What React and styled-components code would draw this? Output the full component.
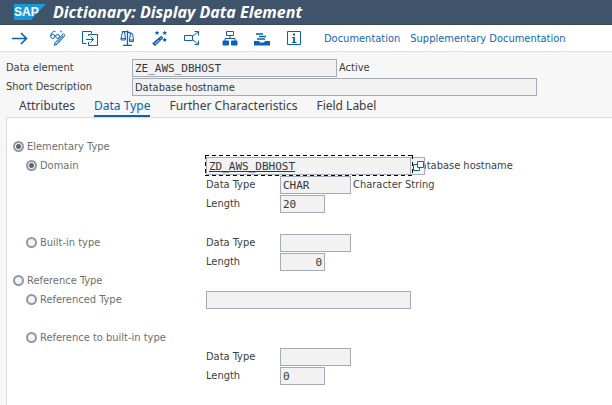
import React from 'react';
import styled, { createGlobalStyle, css } from 'styled-components';

const Global = createGlobalStyle`
  *, *::before, *::after { box-sizing: border-box; }
  body { margin: 0; background: #f7f7f7; color: #3c4043; }
  body, button, input { font: 11px/19px "DejaVu Sans Condensed", Roboto, sans-serif; }
`;

const Page = styled.div`
  display: flex;
  flex-direction: column;
  min-height: 100vh;
  overflow: hidden;
`;

const TitleBar = styled.header`
  display: flex;
  align-items: center;
  gap: 7px;
  height: 25px;
  padding-left: 14px;
  background: #3f546b;
  border-bottom: 1px solid #34485e;
`;

const Title = styled.h1`
  margin: 0;
  color: #fff;
  font-family: "Noto Sans", sans-serif;
  font-size: 16px;
  line-height: 24px;
  font-weight: 700;
  font-style: italic;
  white-space: nowrap;
`;

const Toolbar = styled.nav`
  display: flex;
  align-items: center;
  gap: 22px;
  height: 27px;
  padding-left: 12px;
  background: #fff;
  border-bottom: 1px solid #dedede;
`;

const ToolGroup = styled.div`
  display: flex;
  gap: ${(p) => p.$gap || 16}px;
`;

const bare = css`
  padding: 0;
  border: 0;
  background: none;
  cursor: pointer;
`;

const IconButton = styled.button`
  ${bare}
  display: flex;
  width: 16px;
  height: 16px;
  color: #0a61b5;
  svg { display: block; }
`;

const TextButton = styled.button`
  ${bare}
  color: #1466b3;
  white-space: nowrap;
`;

const Header = styled.section`
  display: grid;
  grid-template-columns: 126px 1fr;
  padding: 6px 6px 0;
`;

const HeaderLabel = styled.label`
  line-height: 20px;
  height: 19px;
  white-space: nowrap;
`;

const FieldLine = styled.div`
  display: flex;
  align-items: center;
  gap: 2px;
  height: 19px;
  white-space: nowrap;
`;

const Field = styled.input`
  flex: none;
  width: ${(p) => p.$w}px;
  height: 18px;
  padding: 1px 2px 0;
  border: 1px solid #a3abb5;
  border-radius: 0;
  outline: 0;
  background: #f2f2f2;
  color: #33373b;
  line-height: 15px;
  text-align: ${(p) => (p.$right ? 'right' : 'left')};
  ${(p) => p.$mono && css`font-family: "DejaVu Sans Mono", monospace;`}
  ${(p) => p.$link && css`text-decoration: underline;`}
`;

const Tabs = styled.div`
  display: flex;
  gap: 19px;
  height: 21px;
  padding-left: 19px;
`;

const Tab = styled.button`
  ${bare}
  height: 21px;
  border-bottom: 2px solid ${(p) => (p.$active ? '#0a61b5' : 'transparent')};
  color: ${(p) => (p.$active ? '#0a61b5' : '#3c4043')};
  font-family: "Noto Sans", sans-serif;
  font-size: 12px;
  line-height: 19px;
  white-space: nowrap;
`;

const Panel = styled.main`
  flex: 1;
  margin-left: 6px;
  padding: 19px 0 0 6px;
  border: 1px solid #dcdcdc;
  border-width: 1px 0 0 1px;
  background: #fff;
`;

const Group = styled.section`
  display: flex;
  flex-direction: column;
`;

const Option = styled.div`
  display: grid;
  grid-template-columns: 193px 1fr;
  min-height: 38px;
  margin-bottom: ${(p) => p.$after || 0}px;
`;

const RadioLabel = styled.label`
  display: flex;
  align-items: center;
  gap: 3px;
  height: 19px;
  padding-left: ${(p) => (p.$nested ? 13 : 0)}px;
  color: #6c6f73;
  white-space: nowrap;
`;

const Radio = styled.input`
  appearance: none;
  flex: none;
  width: 11px;
  height: 11px;
  margin: 0;
  border: 2px solid #8d98a8;
  border-radius: 50%;
  background: #f4f4f4;
  &:checked { background: radial-gradient(circle, #5f6670 2px, #f4f4f4 3px); }
`;

const Detail = styled.div`
  display: flex;
  flex-direction: column;
`;

const DetailLabel = styled.label`
  width: 72px;
`;

const dash = '#000 0 4px, transparent 4px 7px';

const DomainBox = styled.div`
  position: relative;
  display: flex;
  flex: none;
  width: 205px;
  height: 18px;
  &::after {
    content: '';
    position: absolute;
    inset: -2px -2px -1px -1px;
    background:
      repeating-linear-gradient(to right, ${dash}) top / 100% 1px no-repeat,
      repeating-linear-gradient(to right, ${dash}) bottom / 100% 1px no-repeat,
      repeating-linear-gradient(to bottom, ${dash}) left / 1px 100% no-repeat,
      repeating-linear-gradient(to bottom, ${dash}) right / 1px 100% no-repeat;
    pointer-events: none;
  }
`;

const LookupButton = styled.button`
  position: absolute;
  top: 0;
  left: 205px;
  width: 14px;
  height: 18px;
  padding: 2px 0 0 2px;
  border: 1px solid #a3abb5;
  border-left: 0;
  background: #f4f4f4;
  color: #0a61b5;
  svg { display: block; }
`;

const Svg = ({ children }) => (
  <svg width="16" height="16" viewBox="0 0 16 16" fill="none" stroke="currentColor" strokeWidth="1" aria-hidden="true">
    {children}
  </svg>
);

const icons = {
  enter: <path d="M0 8.5h14M9 3l5.5 5.5L9 14" strokeWidth="1.6" />,
  display: (
    <>
      <path d="M5.5 1.2C3 1 .7 3 .7 6.2" />
      <circle cx="2.7" cy="6.4" r="2" />
      <circle cx="7.6" cy="6.4" r="1.9" />
      <path d="M10 1.2c1-.4 2 .2 1.8 1.2M4.7 5.8q.6-.5 1 0" />
      <path d="M13.4 3.8l1.6 1.5-8 9-2.6 1 .8-2.7zM5.6 13l1.2 1.2M11.8 5.6l1.6 1.5M7 12.6l5.5-6" />
    </>
  ),
  other: (
    <>
      <path d="M9.5 3.5v-2h-9v12h4M6.5 6V4.5h9v11h-9V12" />
      <path d="M4 9.5h7.5M8.5 6.5l3 3-3 3" />
    </>
  ),
  scales: (
    <>
      <path d="M7.5 .5V15M3 15.3h9M2 1.6h5l5 2" strokeWidth="1.3" />
      <path d="M2.5 2L1 8.500v1.500h4.500V8.500L4.500 2M1 8.500h4.500M10.500 3.500L9.500 10v1.500h4V10l-1-6.500M9.500 10h4" />
    </>
  ),
  wand: (
    <>
      <path d="M9 6.5l1.5 1.5-7.5 7.3-2-1.8zM7 8.5l1.5 1.5M2 13.5l6.5-6" strokeWidth="1.2" />
      <g fill="currentColor" stroke="none">
        <path d="M5 .5l.7 1.5 1.6.2-1.2 1.1.3 1.6L5 4.1l-1.4.8.3-1.6-1.2-1.1 1.6-.2z" />
        <path d="M12.7.5l.7 1.5 1.6.2-1.2 1.1.3 1.6-1.4-.8-1.4.8.3-1.6-1.2-1.1 1.6-.2z" />
        <path d="M12.7 7.5l.7 1.5 1.6.2-1.2 1.1.3 1.6-1.4-.8-1.4.8.3-1.6-1.2-1.1 1.6-.2z" />
      </g>
    </>
  ),
  whereUsed: (
    <>
      <path d="M.5 5.5h8v5h-8z" />
      <path d="M9 6l5.5-4.5M9 10l5.5 4.5M10.5 1.5h4v4M10.5 14.5h4v-4" />
    </>
  ),
  hierarchy: (
    <>
      <path d="M4.5 1.5h7v4h-7zM8 5.5v3M3 11V8.5h10V11" />
      <path d="M1 11h5.5v4H1zM9.5 11H15v4H9.5z" fill="currentColor" />
    </>
  ),
  stack: (
    <>
      <path d="M2 4h7M5 6.5h7M3 9h8" strokeWidth="1.5" />
      <path d="M0 11h5l1 1.5h4L11 11h5v4.5H0z" fill="currentColor" stroke="none" />
    </>
  ),
  info: (
    <>
      <path d="M1.5 1.5h13v13h-13z" />
      <path d="M7 3.5h2v2H7zM6 7h3v5h1.5v1H6v-1h1.2V8H6z" fill="currentColor" stroke="none" />
    </>
  ),
};

const toolGroups = [
  [['Enter', 'enter']],
  [['Display or change', 'display'], ['Other object', 'other']],
  [['Check', 'scales'], ['Activate', 'wand'], ['Where-used list', 'whereUsed']],
  [['Object hierarchy', 'hierarchy'], ['Append', 'stack'], ['Information', 'info']],
];

const tabs = ['Attributes', 'Data Type', 'Further Characteristics', 'Field Label'];

function SapLogo() {
  return (
    <svg width="32" height="16" viewBox="0 0 32 16" role="img" aria-label="SAP">
      <path d="M0 0h32L17 16H0z" fill="#1899dc" />
      <text x="0" y="12" fill="#fff" fontFamily="Liberation Sans, sans-serif" fontWeight="700" fontSize="12">SAP</text>
    </svg>
  );
}

function RadioOption({ name, label, nested, checked }) {
  return (
    <RadioLabel $nested={nested}>
      <Radio type="radio" name={name} defaultChecked={checked} />
      {label}
    </RadioLabel>
  );
}

function DetailLine({ id, label, width, value = '', right, note }) {
  return (
    <FieldLine>
      <DetailLabel htmlFor={id}>{label}</DetailLabel>
      <Field id={id} $w={width} $mono $right={right} defaultValue={value} readOnly />
      {note && <span>{note}</span>}
    </FieldLine>
  );
}

export default function App() {
  return (
    <Page>
      <Global />
      <TitleBar>
        <SapLogo />
        <Title>Dictionary: Display Data Element</Title>
      </TitleBar>

      <Toolbar>
        {toolGroups.map((group) => (
          <ToolGroup key={group[0][1]}>
            {group.map(([label, icon]) => (
              <IconButton key={icon} type="button" aria-label={label}>
                <Svg>{icons[icon]}</Svg>
              </IconButton>
            ))}
          </ToolGroup>
        ))}
        <ToolGroup $gap={10}>
          <TextButton type="button">Documentation</TextButton>
          <TextButton type="button">Supplementary Documentation</TextButton>
        </ToolGroup>
      </Toolbar>

      <Header>
        <HeaderLabel htmlFor="element">Data element</HeaderLabel>
        <FieldLine>
          <Field id="element" $w={205} $mono defaultValue="ZE_AWS_DBHOST" readOnly />
          <span>Active</span>
        </FieldLine>
        <HeaderLabel htmlFor="description">Short Description</HeaderLabel>
        <FieldLine>
          <Field id="description" $w={405} defaultValue="Database hostname" readOnly />
        </FieldLine>
      </Header>

      <Tabs role="tablist">
        {tabs.map((name) => (
          <Tab key={name} type="button" role="tab" aria-selected={name === 'Data Type'} $active={name === 'Data Type'}>
            {name}
          </Tab>
        ))}
      </Tabs>

      <Panel>
        <Group>
          <RadioOption name="category" label="Elementary Type" checked />
          <Option $after={20}>
            <RadioOption name="elementary" label="Domain" nested checked />
            <Detail>
              <FieldLine>
                <DomainBox>
                  <Field $w={205} $mono $link aria-label="Domain name" defaultValue="ZD_AWS_DBHOST" readOnly />
                  <LookupButton type="button" aria-label="Search help">
                    <svg width="12" height="11" viewBox="0 0 12 11" fill="#fff" stroke="currentColor" aria-hidden="true">
                      <path d="M.5 3.5h6v6h-6z" />
                      <path d="M4.5.5h6v6h-6z" />
                    </svg>
                  </LookupButton>
                </DomainBox>
                <span>Database hostname</span>
              </FieldLine>
              <DetailLine id="domain-type" label="Data Type" width={71} value="CHAR" note="Character String" />
              <DetailLine id="domain-length" label="Length" width={45} value="20" />
            </Detail>
          </Option>
          <Option>
            <RadioOption name="elementary" label="Built-in type" nested />
            <Detail>
              <DetailLine id="builtin-type" label="Data Type" width={71} />
              <DetailLine id="builtin-length" label="Length" width={45} value="0" right />
            </Detail>
          </Option>
        </Group>

        <Group>
          <RadioOption name="category" label="Reference Type" />
          <Option>
            <RadioOption name="reference" label="Referenced Type" nested />
            <FieldLine>
              <Field $w={205} $mono aria-label="Referenced type name" readOnly />
            </FieldLine>
          </Option>
          <RadioOption name="reference" label="Reference to built-in type" nested />
          <Option>
            <span />
            <Detail>
              <DetailLine id="ref-type" label="Data Type" width={71} />
              <DetailLine id="ref-length" label="Length" width={45} value="0" />
            </Detail>
          </Option>
        </Group>
      </Panel>
    </Page>
  );
}
